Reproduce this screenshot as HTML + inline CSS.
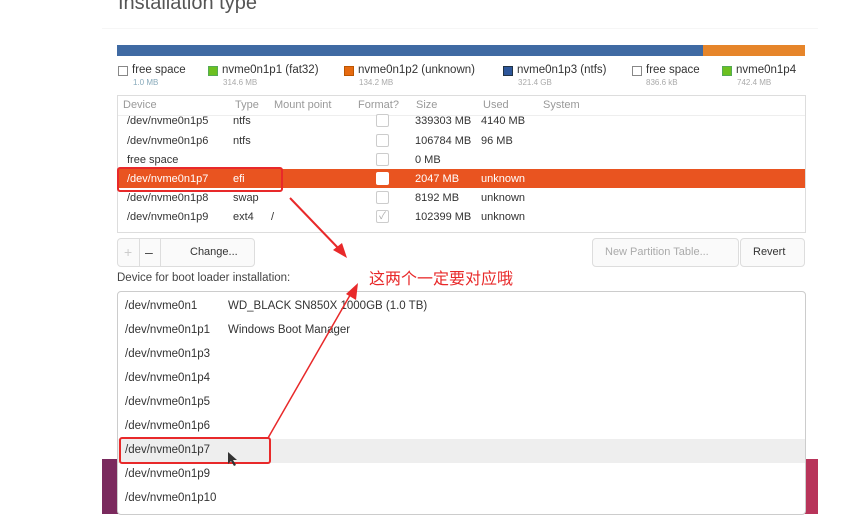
<!DOCTYPE html>
<html><head><meta charset="utf-8"><style>
body{margin:0;width:844px;height:526px;background:#fff;position:relative;overflow:hidden;font-family:"Liberation Sans","Noto Sans CJK SC",sans-serif;}
.a{position:absolute;white-space:nowrap}
.t{font-size:11px;color:#333}
.h{font-size:11px;color:#999}
.cb{position:absolute;width:11px;height:11px;border:1px solid #ccc;border-radius:2px;background:#fff}
.lg{position:absolute;width:8px;height:8px;border:1px solid #888}
.li{position:absolute;left:125px;font-size:11.5px;color:#333}
</style></head><body>
<div class="a" style="left:118px;top:-8px;font-size:20px;color:#555">Installation type</div>
<div class="a" style="left:102px;top:28px;width:716px;height:1px;background:#f6f6f6"></div>
<div class="a" style="left:117px;top:45px;width:586px;height:11px;background:#3f6aa3"></div>
<div class="a" style="left:703px;top:45px;width:102px;height:11px;background:#e6852a"></div>
<div class="lg" style="left:118px;top:66px;background:#fff"></div>
<div class="a" style="left:132px;top:64px;font-size:11.5px;color:#333">free space</div>
<div class="a" style="left:133px;top:78px;font-size:8px;color:#8ab">1.0 MB</div>
<div class="lg" style="left:208px;top:66px;background:#6cc020;border-color:#5a5"></div>
<div class="a" style="left:222px;top:64px;font-size:11.5px;color:#333">nvme0n1p1 (fat32)</div>
<div class="a" style="left:223px;top:78px;font-size:8px;color:#aaa">314.6 MB</div>
<div class="lg" style="left:344px;top:66px;background:#e66a10;border-color:#b50"></div>
<div class="a" style="left:358px;top:64px;font-size:11.5px;color:#333">nvme0n1p2 (unknown)</div>
<div class="a" style="left:359px;top:78px;font-size:8px;color:#aaa">134.2 MB</div>
<div class="lg" style="left:503px;top:66px;background:#2d569a;border-color:#234"></div>
<div class="a" style="left:517px;top:64px;font-size:11.5px;color:#333">nvme0n1p3 (ntfs)</div>
<div class="a" style="left:518px;top:78px;font-size:8px;color:#aaa">321.4 GB</div>
<div class="lg" style="left:632px;top:66px;background:#fff"></div>
<div class="a" style="left:646px;top:64px;font-size:11.5px;color:#333">free space</div>
<div class="a" style="left:646px;top:78px;font-size:8px;color:#aaa">836.6 kB</div>
<div class="lg" style="left:722px;top:66px;background:#6cc020;border-color:#5a5"></div>
<div class="a" style="left:736px;top:64px;font-size:11.5px;color:#333">nvme0n1p4</div>
<div class="a" style="left:737px;top:78px;font-size:8px;color:#aaa">742.4 MB</div>
<div class="a" style="left:117px;top:95px;width:687px;height:136px;border:1px solid #ddd;overflow:hidden">
<div class="a" style="left:0;top:0;width:687px;height:19px;border-bottom:1px solid #eee"></div>
<div class="a" style="left:0;top:73px;width:687px;height:19px;background:#e95420"></div>
</div>
<div class="a h" style="left:123px;top:99px">Device</div>
<div class="a h" style="left:235px;top:99px">Type</div>
<div class="a h" style="left:274px;top:99px">Mount point</div>
<div class="a h" style="left:358px;top:99px">Format?</div>
<div class="a h" style="left:416px;top:99px">Size</div>
<div class="a h" style="left:483px;top:99px">Used</div>
<div class="a h" style="left:543px;top:99px">System</div>
<div class="a t" style="left:127px;top:115px">/dev/nvme0n1p5</div><div class="a t" style="left:233px;top:115px">ntfs</div><div class="a t" style="left:415px;top:115px">339303 MB</div><div class="a t" style="left:481px;top:115px">4140 MB</div>
<div class="cb" style="left:376px;top:114px"></div>
<div class="a t" style="left:127px;top:135px">/dev/nvme0n1p6</div><div class="a t" style="left:233px;top:135px">ntfs</div><div class="a t" style="left:415px;top:135px">106784 MB</div><div class="a t" style="left:481px;top:135px">96 MB</div>
<div class="cb" style="left:376px;top:134px"></div>
<div class="a t" style="left:127px;top:154px">free space</div><div class="a t" style="left:415px;top:154px">0 MB</div>
<div class="cb" style="left:376px;top:153px"></div>
<div class="a t" style="left:127px;top:173px;color:#fff">/dev/nvme0n1p7</div><div class="a t" style="left:233px;top:173px;color:#fff">efi</div><div class="a t" style="left:415px;top:173px;color:#fff">2047 MB</div><div class="a t" style="left:481px;top:173px;color:#fff">unknown</div>
<div class="cb" style="left:376px;top:172px;border-color:#fff"></div>
<div class="a t" style="left:127px;top:192px">/dev/nvme0n1p8</div><div class="a t" style="left:233px;top:192px">swap</div><div class="a t" style="left:415px;top:192px">8192 MB</div><div class="a t" style="left:481px;top:192px">unknown</div>
<div class="cb" style="left:376px;top:191px"></div>
<div class="a t" style="left:127px;top:211px">/dev/nvme0n1p9</div><div class="a t" style="left:233px;top:211px">ext4</div><div class="a t" style="left:271px;top:211px">/</div><div class="a t" style="left:415px;top:211px">102399 MB</div><div class="a t" style="left:481px;top:211px">unknown</div>
<div class="cb" style="left:376px;top:210px;color:#aaa;font-size:10px;line-height:11px;text-align:center">✓</div>
<div class="a" style="left:117px;top:238px;width:136px;height:27px;border:1px solid #ddd;border-radius:4px;background:#fafafa"></div>
<div class="a" style="left:139px;top:238px;width:1px;height:29px;background:#ddd"></div>
<div class="a" style="left:160px;top:238px;width:1px;height:29px;background:#ddd"></div>
<div class="a" style="left:124px;top:244px;font-size:14px;color:#ccc">+</div>
<div class="a" style="left:145px;top:244px;font-size:14px;color:#444">–</div>
<div class="a t" style="left:190px;top:246px">Change...</div>
<div class="a" style="left:592px;top:238px;width:145px;height:27px;border:1px solid #ddd;border-radius:4px;background:#fafafa"></div>
<div class="a" style="left:605px;top:246px;font-size:11px;color:#aaa">New Partition Table...</div>
<div class="a" style="left:740px;top:238px;width:63px;height:27px;border:1px solid #ddd;border-radius:4px;background:#fafafa"></div>
<div class="a t" style="left:753px;top:246px">Revert</div>
<div class="a" style="left:117px;top:272px;font-size:11.5px;color:#444">Device for boot loader installation:</div>
<div class="a" style="left:102px;top:459px;width:716px;height:55px;background:linear-gradient(90deg,#7a2a5e,#a8305c 60%,#b8345a)"></div>
<div class="a" style="left:117px;top:291px;width:687px;height:222px;border:1px solid #ccc;border-radius:4px;background:#fff;overflow:hidden">
<div class="a" style="left:0;top:147px;width:687px;height:24px;background:#eee"></div>
</div>
<div class="li" style="top:300px">/dev/nvme0n1</div><div class="a" style="left:228px;top:300px;font-size:11.5px;color:#333">WD_BLACK SN850X 1000GB (1.0 TB)</div>
<div class="li" style="top:324px">/dev/nvme0n1p1</div><div class="a" style="left:228px;top:324px;font-size:11.5px;color:#333">Windows Boot Manager</div>
<div class="li" style="top:348px">/dev/nvme0n1p3</div>
<div class="li" style="top:372px">/dev/nvme0n1p4</div>
<div class="li" style="top:396px">/dev/nvme0n1p5</div>
<div class="li" style="top:420px">/dev/nvme0n1p6</div>
<div class="li" style="top:444px">/dev/nvme0n1p7</div>
<div class="li" style="top:468px">/dev/nvme0n1p9</div>
<div class="li" style="top:492px">/dev/nvme0n1p10</div>
<div class="a" style="left:117px;top:167px;width:162px;height:21px;border:2px solid #e8292a;border-radius:3px"></div>
<div class="a" style="left:119px;top:437px;width:148px;height:23px;border:2px solid #e8292a;border-radius:3px"></div>
<div class="a" style="left:369px;top:265px;font-size:16px;color:#e8292a">这两个一定要对应哦</div>
<svg class="a" style="left:0;top:0" width="844" height="526">
<line x1="290" y1="198" x2="340" y2="250" stroke="#e8292a" stroke-width="2"/>
<polygon points="347,258 333,250 342,243" fill="#e8292a"/>
<line x1="268" y1="438" x2="353" y2="290" stroke="#e8292a" stroke-width="1.5"/>
<polygon points="358,283 356,300 346,294" fill="#e8292a"/>
<polygon points="228,452 228,464 231,461 234,466 236,465 233,460 237,460" fill="#333"/>
</svg>
</body></html>
